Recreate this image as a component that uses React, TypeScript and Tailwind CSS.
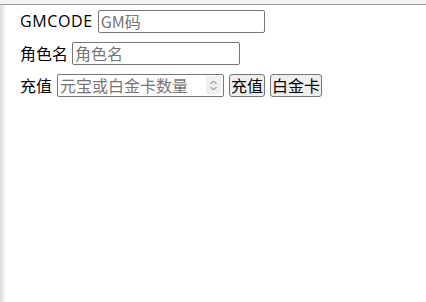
import React from "react";

const font = { fontFamily: '"Noto Sans CJK SC", "Noto Sans", sans-serif' };

export default function App() {
  return (
    <div className="w-[426px] h-[302px] bg-white flex flex-col overflow-hidden" style={font}>
      <div className="h-[5px] shrink-0 bg-[#f2f2f2] border-b border-[#9a9a9a]" />
      <div className="flex flex-1">
        <div className="w-[6px] shrink-0 bg-gradient-to-r from-[#d8d8d8] to-white" />
        <div className="flex flex-col pl-[14px] text-[16px] text-black">
          <div className="flex items-center h-[32px] gap-[5px]">
            <span className="font-['Open_Sans'] tracking-[0.6px]">GMCODE</span>
            <input
              className="w-[167px] h-[23px] border border-[#767676] rounded-[2px] px-[2px] text-[16px] placeholder:text-[#757575] outline-none"
              placeholder="GM码"
            />
          </div>
          <div className="flex items-center h-[32px] gap-[4px]">
            <span>角色名</span>
            <input
              className="w-[168px] h-[23px] border border-[#767676] rounded-[2px] px-[2px] text-[16px] placeholder:text-[#757575] outline-none"
              placeholder="角色名"
            />
          </div>
          <div className="flex items-center h-[32px] gap-[5px]">
            <span>充值</span>
            <div className="w-[167px] h-[23px] border border-[#767676] rounded-[2px] flex items-center pl-[2px] pr-[2px]">
              <input
                className="flex-1 min-w-0 h-full text-[16px] placeholder:text-[#757575] outline-none"
                placeholder="元宝或白金卡数量"
              />
              <div className="w-[15px] h-[18px] bg-[#f0f0f0] flex items-center justify-center">
                <svg width="9" height="13" viewBox="0 0 9 13" fill="none" stroke="#777" strokeWidth="1">
                  <path d="M1.5 5 L4.5 2 L7.5 5" />
                  <path d="M1.5 8 L4.5 11 L7.5 8" />
                </svg>
              </div>
            </div>
            <button className="h-[23px] px-[1px] bg-[#efefef] border border-[#767676] rounded-[3px] text-[16px] leading-none">
              充值
            </button>
            <button className="h-[23px] px-[1px] bg-[#efefef] border border-[#767676] rounded-[3px] text-[16px] leading-none">
              白金卡
            </button>
          </div>
        </div>
      </div>
    </div>
  );
}
